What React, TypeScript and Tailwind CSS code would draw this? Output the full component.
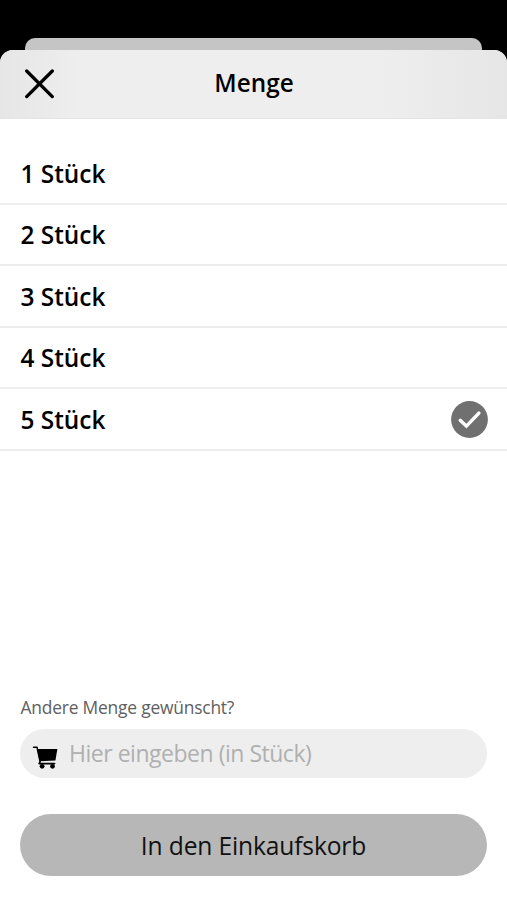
const QUANTITIES = [1, 2, 3, 4, 5]
const SELECTED = 5

function CloseIcon() {
  return (
    <svg className="h-[30px] w-[31px]" viewBox="0 0 31 30" fill="none" stroke="black" strokeWidth="3.3" strokeLinecap="round">
      <path d="M2.7 2 L28.3 27.6 M28.3 2 L2.7 27.6" />
    </svg>
  )
}

function CheckBadge() {
  return (
    <svg className="h-[37px] w-[37px]" viewBox="0 0 37 37" fill="none">
      <circle cx="18.5" cy="18.5" r="18.4" fill="#707070" />
      <path d="M9.2 19.2 L15.4 25.2 L27.9 12.1" stroke="white" strokeWidth="3.4" strokeLinecap="round" strokeLinejoin="miter" />
    </svg>
  )
}

function CartIcon() {
  return (
    <svg className="h-6 w-[26px]" viewBox="0 0 26 24" fill="none">
      <path d="M5 3.9 H25.4 L23.4 15.4 L7.6 16.2 Z" fill="black" />
      <path d="M1.6 2.2 H5 L8.1 16.4 L7.2 18.6 H22.6" stroke="black" strokeWidth="1.6" strokeLinecap="round" strokeLinejoin="round" />
      <circle cx="10.1" cy="21.3" r="2.4" fill="black" />
      <circle cx="20.5" cy="21.3" r="2.4" fill="black" />
    </svg>
  )
}

export default function App() {
  return (
    <div className="flex h-[900px] w-[507px] flex-col overflow-hidden bg-black pt-[38px] font-['Open_Sans','Noto_Sans',sans-serif] text-black">
      {/* Edge of the sheet behind */}
      <div className="mx-[25px] h-3 shrink-0 rounded-t-[10px] bg-[#c5c5c5]" />

      <div className="flex min-h-0 flex-1 flex-col overflow-hidden rounded-t-[13px] bg-white">
        <header className="grid h-[69px] shrink-0 grid-cols-[1fr_auto_1fr] items-center border-b border-[#e4e4e4] bg-[linear-gradient(to_right,#e6e6e6,#eeeeee_16%,#eeeeee_75%,#e6e6e6)] px-6">
          <button type="button" aria-label="Schließen" className="w-[31px]">
            <CloseIcon />
          </button>
          <h1 className="pb-0.5 pl-px text-[24.3px] leading-8 font-semibold">Menge</h1>
        </header>

        <ul className="pt-[24px]">
          {QUANTITIES.map((n) => (
            <li
              key={n}
              className="flex h-[61.5px] items-center justify-between border-b-2 border-[#ececec] pr-[19.5px] pl-5"
            >
              <span className="pt-[1.6px] pl-[0.5px] text-[24.4px] leading-8 font-semibold">{n} Stück</span>
              {n === SELECTED && (
                <div className="pt-px">
                  <CheckBadge />
                </div>
              )}
            </li>
          ))}
        </ul>

        <div className="mt-auto flex flex-col px-5 pb-6">
          <label htmlFor="amount" className="mb-px pl-[0.5px] text-[17.4px] leading-6 tracking-[-0.2px] text-[#606060]">
            Andere Menge gewünscht?
          </label>
          <div className="mt-[9px] flex h-[49px] items-center rounded-full bg-[#eeeeee] pl-3">
            <div className="pt-1.5">
              <CartIcon />
            </div>
            <input
              id="amount"
              placeholder="Hier eingeben (in Stück)"
              className="ml-[11px] h-8 w-[380px] bg-transparent text-[23px] tracking-[-0.48px] outline-none placeholder:text-[#b0b0b0]"
            />
          </div>
          <button type="button" className="mt-9 h-[62px] rounded-full bg-[#b7b7b7] pt-0.5 text-[24.6px] tracking-[-0.15px] text-[#111111]">
            In den Einkaufskorb
          </button>
        </div>
      </div>
    </div>
  )
}
